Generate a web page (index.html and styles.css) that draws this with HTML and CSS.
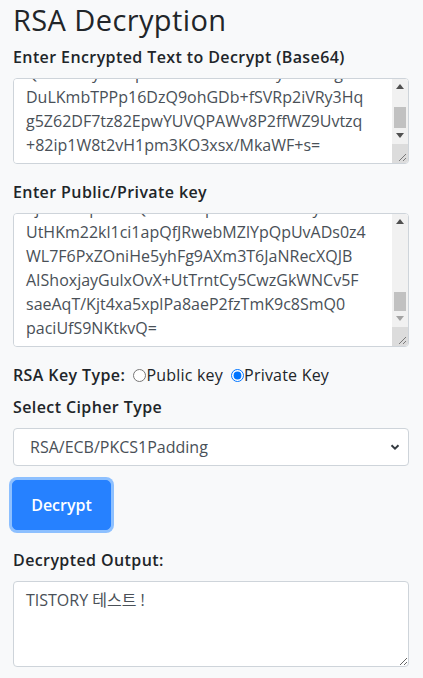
FILE: index.html
```html
<!DOCTYPE html>
<html>
<head>
  <title>RSA Decryption</title>
  <link rel="stylesheet" href="styles.css">
</head>
<body>

  <div class="page">
    <h1>RSA Decryption</h1>

    <label for="cipher-text">Enter Encrypted Text to Decrypt (Base64)</label>
    <div class="ta-wrap">
      <textarea id="cipher-text" class="field scroll-end" rows="3" spellcheck="false">hR3kQ8vZt2mW9pLx7cYbN4sJfE1uGdA6oK0iTq
aF2eD7jU3kL9mN1oP4qR6sT8uV0wX2yZ5bC7dE
QNIe9bZywlCxpFm3urxHzBwvxcLytKvHmgNx
DuLKmbTPPp16DzQ9ohGDb+fSVRp2iVRy3Hq
g5Z62DF7tz82EpwYUVQPAWv8P2ffWZ9Uvtzq
+82ip1W8t2vH1pm3KO3xsx/MkaWF+s=</textarea>
      <div class="fake-bar" aria-hidden="true">
        <span class="bar-btn"><svg width="8" height="5"><path d="M0 5 L4 0 L8 5 Z" fill="#505050"/></svg></span>
        <span class="bar-track"><span class="bar-thumb thumb-short"></span></span>
        <span class="bar-btn"><svg width="8" height="5"><path d="M0 0 L4 5 L8 0 Z" fill="#505050"/></svg></span>
        <span class="bar-corner"><svg width="10" height="10"><path d="M9 2 L2 9 M9 6 L6 9" stroke="#7a7a7a" stroke-width="1"/></svg></span>
      </div>
    </div>

    <label for="key-text">Enter Public/Private key</label>
    <div class="ta-wrap">
      <textarea id="key-text" class="field scroll-end" rows="5" spellcheck="false">MIICdgIBADANBgkqhkiG9w0BAQEFAASCAmAw
x9Qp2RtLm8VwYzN3cF7bHj4KsDa1eGu6oIiT
kPq8TmW2nR4sUvX6yZ0aB2cD4eF6gH8iJ0kL
Zj0d3oOpE+aaQwWx/Bqr3BkL7sMxN1yHa4c
UtHKm22kl1ci1apQfJRwebMZlYpQpUvADs0z4
WL7F6PxZOniHe5yhFg9AXm3T6JaNRecXQJB
AIShoxjayGulxOvX+UtTrntCy5CwzGkWNCv5F
saeAqT/Kjt4xa5xplPa8aeP2fzTmK9c8SmQ0
paciUfS9NKtkvQ=</textarea>
      <div class="fake-bar" aria-hidden="true">
        <span class="bar-btn"><svg width="8" height="5"><path d="M0 5 L4 0 L8 5 Z" fill="#505050"/></svg></span>
        <span class="bar-track"><span class="bar-thumb thumb-small"></span></span>
        <span class="bar-btn"><svg width="8" height="5"><path d="M0 0 L4 5 L8 0 Z" fill="#a3a3a3"/></svg></span>
        <span class="bar-corner"><svg width="10" height="10"><path d="M9 2 L2 9 M9 6 L6 9" stroke="#7a7a7a" stroke-width="1"/></svg></span>
      </div>
    </div>

    <div class="key-type">
      <span class="key-type-label">RSA Key Type:</span>
      <input type="radio" name="keytype" id="public-key"><label for="public-key" class="inline">Public key</label>
      <input type="radio" name="keytype" id="private-key" checked><label for="private-key" class="inline">Private Key</label>
    </div>

    <label for="cipher-type">Select Cipher Type</label>
    <div class="select-wrap">
      <select id="cipher-type" class="field select">
        <option>RSA/ECB/PKCS1Padding</option>
        <option>RSA/ECB/OAEPWithSHA-1AndMGF1Padding</option>
        <option>RSA/ECB/OAEPWithSHA-256AndMGF1Padding</option>
      </select>
      <svg class="chevron" width="10" height="8" viewBox="0 0 10 8">
        <path d="M1.5 2.2 L5 5.6 L8.5 2.2" fill="none" stroke="#343a40" stroke-width="2"/>
      </svg>
    </div>

    <button class="btn-decrypt">Decrypt</button>

    <label for="output" class="output-label">Decrypted Output:</label>
    <textarea id="output" class="field output" rows="3">TISTORY 테스트 !</textarea>
  </div>

  <script>
    // show the end of long base64 values, like after pasting
    document.querySelectorAll(".scroll-end").forEach(el => {
      el.scrollTop = el.scrollHeight;
    });
  </script>

</body>
</html>
```

FILE: styles.css
```css
body {
  font-family: 'Open Sans', 'Noto Sans CJK KR', sans-serif;
  background: #f8f9fa;
  color: #212529;
  margin: 0;
}
.page {
  padding: 0 14px 0 13px;
}
h1 {
  font-size: 29px;
  font-weight: 400;
  letter-spacing: 0.4px;
  line-height: 1.2;
  margin: 3px 0 7px;
}
label {
  display: block;
  font-weight: 600;
  font-size: 16px;
  letter-spacing: 0.4px;
  line-height: 24px;
  margin-bottom: 9px;
}
label.inline {
  display: inline;
  font-weight: 400;
  letter-spacing: 0.2px;
  margin: 0;
}
.field {
  display: block;
  width: 100%;
  box-sizing: border-box;
  font-family: 'Open Sans', 'Noto Sans CJK KR', sans-serif;
  font-size: 16px;
  line-height: 24px;
  color: #495057;
  background: #fff;
  border: 1px solid #ced4da;
  border-radius: 4px;
  padding: 6px 12px;
  margin: 0 0 16px;
}
textarea.field {
  white-space: pre-wrap;
}
.ta-wrap {
  position: relative;
  margin-bottom: 16px;
}
.ta-wrap .field {
  margin: 0;
  padding-right: 28px;
}

/* classic scrollbar look, drawn over the textarea edge */
.fake-bar {
  position: absolute;
  top: 1px;
  right: 1px;
  bottom: 1px;
  width: 16px;
  display: flex;
  flex-direction: column;
  background: #f1f1f1;
  border-radius: 0 3px 3px 0;
  overflow: hidden;
}
.bar-btn {
  height: 16px;
  flex: none;
  display: flex;
  align-items: center;
  justify-content: center;
}
.bar-track {
  flex: 1;
  display: flex;
  flex-direction: column;
  justify-content: flex-end;
}
.bar-thumb {
  margin: 0 2px;
  background: #c1c1c1;
}
.thumb-short {
  height: 21px;
}
.thumb-small {
  height: 19px;
}
.bar-corner {
  height: 18px;
  flex: none;
  background: #dcdcdc;
  display: flex;
  align-items: flex-end;
  justify-content: flex-end;
  padding: 0 1px 1px 0;
}

.key-type {
  font-size: 16px;
  line-height: 24px;
  margin: 16px 0 8px;
}
.key-type-label {
  font-weight: 600;
  letter-spacing: 0.4px;
}
.key-type input {
  margin: 0 0 0 4px;
  vertical-align: -1px;
}
.select-wrap {
  position: relative;
  margin-bottom: 14px;
}
.select {
  appearance: none;
  height: 38px;
  padding: 6px 30px 6px 16px;
  margin: 0;
}
.chevron {
  position: absolute;
  right: 9px;
  top: 15px;
}
.btn-decrypt {
  display: block;
  font-family: 'Open Sans', sans-serif;
  font-size: 16px;
  font-weight: 600;
  color: #fff;
  background: #2681ff;
  border: 1px solid #2681ff;
  border-radius: 5px;
  width: 99px;
  height: 50px;
  margin: 0 0 0 -1px;
  box-shadow: 0 0 0 3px #8dc0ff;
  cursor: pointer;
}
.output-label {
  margin-top: 18px;
}
.output {
  margin-bottom: 0;
}
```
